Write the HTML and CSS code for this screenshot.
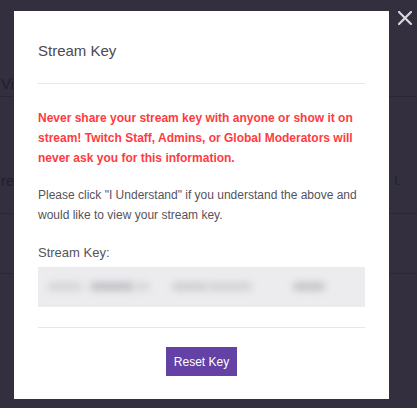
FILE: index.html
```html
<!DOCTYPE html>
<html>
<head>
<meta charset="utf-8">
<link rel="stylesheet" href="styles.css">
</head>
<body>
<div class="page">
  <div class="bg-row bg-row-1"><span class="bg-text">Vi</span></div>
  <div class="bg-row bg-row-2"><span class="bg-text">re</span><span class="bg-text bg-right">l.</span></div>
  <div class="bg-row bg-row-3"></div>
</div>

<div class="modal">
  <h1 class="modal-title">Stream Key</h1>
  <hr class="divider">
  <p class="warning">Never share your stream key with anyone or show it on stream! Twitch Staff, Admins, or Global Moderators will never ask you for this information.</p>
  <p class="info">Please click "I Understand" if you understand the above and would like to view your stream key.</p>
  <div class="field-label">Stream Key:</div>
  <div class="key-box">
    <span class="blob b1"></span>
    <span class="blob b2"></span>
    <span class="blob b3"></span>
    <span class="blob b4"></span>
    <span class="blob b5"></span>
    <span class="blob b6"></span>
  </div>
  <hr class="divider divider-bottom">
  <div class="actions"><button class="btn">Reset Key</button></div>
</div>

<button class="close" aria-label="Close">
  <svg width="14" height="14" viewBox="0 0 14 14"><path d="M1 1L13 13M13 1L1 13" stroke="#d9d8dd" stroke-width="2.2" stroke-linecap="square"/></svg>
</button>
</body>
</html>
```
FILE: styles.css
```css
* { box-sizing: border-box; }
html, body { margin: 0; padding: 0; }
body {
  width: 417px;
  height: 408px;
  overflow: hidden;
  background: #332f3e;
  font-family: "Liberation Sans", Arial, Helvetica, sans-serif;
  position: relative;
}
.page { display: flex; flex-direction: column; }
.bg-row {
  display: flex;
  justify-content: space-between;
  align-items: flex-start;
  border-bottom: 1px solid #2b2835;
  padding-left: 1px;
}
.bg-row-1 { height: 97px; padding-top: 75px; }
.bg-row-2 { height: 117px; padding-top: 75px; }
.bg-row-3 { height: 60px; }
.bg-text {
  color: #221f2a;
  font-size: 15px;
  line-height: 18px;
}
.bg-right { margin-right: 16px; font-size: 13px; }

.modal {
  position: absolute;
  left: 14px;
  top: 11px;
  width: 375px;
  height: 388px;
  background: #fff;
  padding: 30px 24px 23px;
  display: flex;
  flex-direction: column;
}
.modal-title {
  margin: 0;
  font-size: 15px;
  line-height: 20px;
  font-weight: normal;
  color: #4b4953;
}
.divider {
  margin: 22px 0 0;
  border: 0;
  height: 1px;
  background: #e7e6ea;
}
.warning {
  margin: 24px 0 0;
  font-size: 12px;
  line-height: 20px;
  font-weight: bold;
  color: #ff3b3f;
}
.info {
  margin: 17px 0 0;
  font-size: 12px;
  line-height: 20px;
  color: #55535c;
}
.field-label {
  margin-top: 19px;
  font-size: 13px;
  line-height: 18px;
  color: #55535c;
}
.key-box {
  margin-top: 5px;
  height: 40px;
  background: #ececef;
  position: relative;
  overflow: hidden;
}
.blob {
  position: absolute;
  top: 15px;
  height: 9px;
  border-radius: 4px;
  background: #cfced3;
  filter: blur(3.5px);
}
.b1 { left: 10px; width: 34px; background: #d6d5d9; }
.b2 { left: 52px; width: 44px; background: #c3c2c7; }
.b3 { left: 96px; width: 16px; background: #d8d7db; }
.b4 { left: 134px; width: 36px; background: #d0cfd4; }
.b5 { left: 170px; width: 44px; background: #d4d3d7; }
.b6 { left: 255px; width: 32px; background: #c7c6cb; }
.divider-bottom { margin-top: 20px; }
.actions {
  margin-top: 19px;
  display: flex;
  justify-content: center;
}
.btn {
  width: 71px;
  height: 29px;
  border: 0;
  border-radius: 0;
  background: #6441a4;
  color: #fff;
  font-family: "Liberation Sans", Arial, sans-serif;
  font-size: 12px;
  padding: 0;
}
.close {
  position: absolute;
  left: 398px;
  top: 11px;
  width: 14px;
  height: 14px;
  padding: 0;
  border: 0;
  background: transparent;
  display: flex;
}
```
